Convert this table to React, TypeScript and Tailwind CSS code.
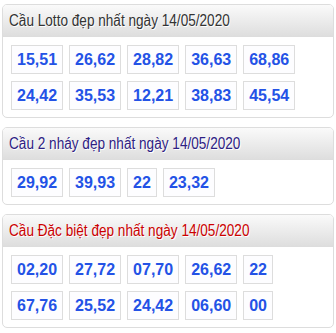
const panels = [
  {
    title: 'Cầu Lotto đẹp nhất ngày 14/05/2020',
    color: 'text-[#333333]',
    numbers: ['15,51', '26,62', '28,82', '36,63', '68,86', '24,42', '35,53', '12,21', '38,83', '45,54'],
  },
  {
    title: 'Cầu 2 nháy đẹp nhất ngày 14/05/2020',
    color: 'text-[#2e2183]',
    numbers: ['29,92', '39,93', '22', '23,32'],
  },
  {
    title: 'Cầu Đặc biệt đẹp nhất ngày 14/05/2020',
    color: 'text-[#cc0000]',
    numbers: ['02,20', '27,72', '07,70', '26,62', '22', '67,76', '25,52', '24,42', '06,60', '00'],
  },
];

export default function App() {
  return (
    <div className="w-[336px] h-[333px] bg-white px-[2px] pt-[4px] flex flex-col gap-[9px] font-['Liberation_Sans',Arial,sans-serif]">
      {panels.map((p) => (
        <div key={p.title} className="border border-[#dddddd] rounded-[5px] overflow-hidden">
          {/* the source header face is narrow; squeeze Arial to match */}
          <div
            className={`h-[32px] border-b border-[#dddddd] bg-gradient-to-b from-[#fafafa] to-[#dedede] px-[6px] flex items-center text-[16px] ${p.color} [text-shadow:1px_1px_0_#ffffff]`}
          >
            <span className="inline-block whitespace-nowrap origin-left scale-x-[0.85]">{p.title}</span>
          </div>
          <div className="pt-[8px] pb-[7px] px-[8px] flex flex-wrap gap-x-[6px] gap-y-[7px]">
            {p.numbers.map((n, i) => (
              <div
                key={i}
                className="h-[29px] px-[5px] border border-[#dddddd] bg-[#fdfdff] flex items-center text-[16px] font-bold text-[#2352e6]"
              >
                {n}
              </div>
            ))}
          </div>
        </div>
      ))}
    </div>
  );
}
